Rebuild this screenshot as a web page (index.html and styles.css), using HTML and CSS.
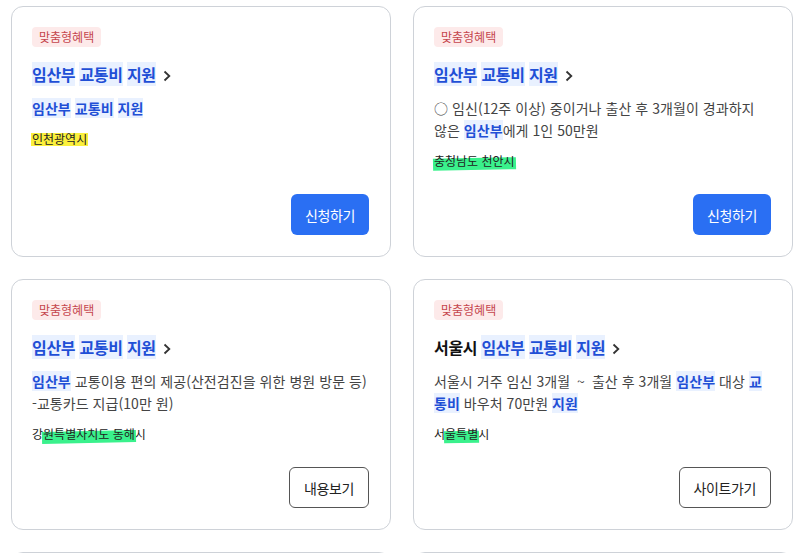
FILE: index.html
```html
<!DOCTYPE html>
<html lang="ko">
<head>
    <meta charset="UTF-8">
    <meta name="viewport" content="width=device-width, initial-scale=1.0">
    <title>맞춤형혜택</title>
    <link rel="stylesheet" href="styles.css">
</head>
<body>
    <main class="lista">
        <article class="card">
            <span class="tag">맞춤형혜택</span>
            <h3 class="titulo"><mark>임산부</mark> <mark>교통비</mark> <mark>지원</mark> <svg class="seta" width="8" height="12" viewBox="0 0 8 12"><path d="M1.5 1.5 L6.3 6 L1.5 10.5" fill="none" stroke="#333" stroke-width="1.8"/></svg></h3>
            <p class="desc"><mark>임산부</mark> <mark>교통비</mark> <mark>지원</mark></p>
            <p class="local"><span class="hl amarelo">인천광역시</span></p>
            <div class="acoes"><a class="btn btn-azul" href="#">신청하기</a></div>
        </article>

        <article class="card">
            <span class="tag">맞춤형혜택</span>
            <h3 class="titulo"><mark>임산부</mark> <mark>교통비</mark> <mark>지원</mark> <svg class="seta" width="8" height="12" viewBox="0 0 8 12"><path d="M1.5 1.5 L6.3 6 L1.5 10.5" fill="none" stroke="#333" stroke-width="1.8"/></svg></h3>
            <p class="desc">○ 임신(12주 이상) 중이거나 출산 후 3개월이 경과하지 않은 <mark>임산부</mark>에게 1인 50만원</p>
            <p class="local"><span class="hl verde">충청남도 천안시</span></p>
            <div class="acoes"><a class="btn btn-azul" href="#">신청하기</a></div>
        </article>

        <article class="card">
            <span class="tag">맞춤형혜택</span>
            <h3 class="titulo"><mark>임산부</mark> <mark>교통비</mark> <mark>지원</mark> <svg class="seta" width="8" height="12" viewBox="0 0 8 12"><path d="M1.5 1.5 L6.3 6 L1.5 10.5" fill="none" stroke="#333" stroke-width="1.8"/></svg></h3>
            <p class="desc"><mark>임산부</mark> 교통이용 편의 제공(산전검진을 위한 병원 방문 등) -교통카드 지급(10만 원)</p>
            <p class="local">강<span class="hl verde">원특별자치도 동해</span>시</p>
            <div class="acoes"><a class="btn btn-borda" href="#">내용보기</a></div>
        </article>

        <article class="card">
            <span class="tag">맞춤형혜택</span>
            <h3 class="titulo">서울시 <mark>임산부</mark> <mark>교통비</mark> <mark>지원</mark> <svg class="seta" width="8" height="12" viewBox="0 0 8 12"><path d="M1.5 1.5 L6.3 6 L1.5 10.5" fill="none" stroke="#333" stroke-width="1.8"/></svg></h3>
            <p class="desc">서울시 거주 임신 3개월 <span class="til">~</span> 출산 후 3개월 <mark>임산부</mark> 대상 <mark>교통비</mark> 바우처 70만원 <mark>지원</mark></p>
            <p class="local">서<span class="hl verde">울특별</span>시</p>
            <div class="acoes"><a class="btn btn-borda" href="#">사이트가기</a></div>
        </article>

        <article class="card">
            <span class="tag">맞춤형혜택</span>
            <h3 class="titulo"><mark>임산부</mark> <mark>교통비</mark> <mark>지원</mark></h3>
        </article>

        <article class="card">
            <span class="tag">맞춤형혜택</span>
            <h3 class="titulo"><mark>임산부</mark> <mark>교통비</mark> <mark>지원</mark></h3>
        </article>
    </main>
</body>
</html>
```

FILE: styles.css
```css
body {
    margin: 0;
    background-color: #fff;
    color: #222;
    font-family: "Noto Sans CJK KR", "Noto Sans", sans-serif;
}
.lista {
    display: grid;
    grid-template-columns: 1fr 1fr;
    gap: 22px;
    padding: 6px 7px 0 11px;
}
.card {
    box-sizing: border-box;
    height: 251px;
    border: 1px solid #ced2d8;
    border-radius: 12px;
    padding: 20px 21px 21px 20px;
    display: flex;
    flex-direction: column;
    align-items: flex-start;
}
.tag {
    font-size: 12px;
    line-height: 20px;
    padding: 0 7px;
    border-radius: 4px;
    background-color: #fdeaea;
    color: #c5464d;
}
.titulo {
    margin: 15px 0 0;
    font-size: 16px;
    line-height: 24px;
    font-weight: 700;
    color: #111;
    letter-spacing: -0.3px;
}
.seta {
    vertical-align: -1px;
    margin-left: 3px;
}
mark {
    background-color: #e9f1ff;
    color: #1f4fd6;
    font-weight: 700;
}
.desc {
    margin: 11px 0 0;
    font-size: 14px;
    line-height: 22px;
    color: #444;
    letter-spacing: 0.05px;
}
.til {
    padding: 0 3px;
}
.local {
    margin: 11px 0 0;
    font-size: 12px;
    line-height: 18px;
    color: #222;
}
.hl {
    position: relative;
    z-index: 0;
}
.hl::before {
    content: "";
    position: absolute;
    z-index: -1;
    left: -1px;
    right: -1px;
    top: 3px;
    bottom: 1px;
}
.amarelo::before {
    background-color: #fbf03c;
}
.verde::before {
    top: 6px;
    bottom: -1px;
    background-color: #3af18c;
    transform: rotate(-1.2deg);
}
.acoes {
    margin-top: auto;
    align-self: flex-end;
}
.btn {
    display: inline-flex;
    align-items: center;
    box-sizing: border-box;
    height: 41px;
    padding: 0 14px;
    border-radius: 6px;
    font-size: 14px;
    letter-spacing: -0.4px;
    text-decoration: none;
}
.btn-azul {
    background-color: #2a6ff3;
    color: white;
}
.btn-borda {
    border: 1px solid #555;
    background-color: white;
    color: #222;
}
```
